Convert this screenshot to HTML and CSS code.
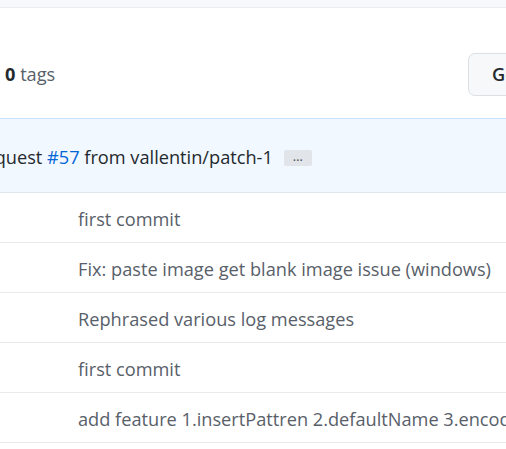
FILE: index.html
```html
<!DOCTYPE html>
<html>
<head>
<meta charset="utf-8">
<link rel="stylesheet" href="styles.css">
</head>
<body>
<div class="page">
  <div class="topband"></div>
  <div class="navrow">
    <div class="tags"><strong>0</strong> tags</div>
    <button class="btn">Go to file</button>
  </div>
  <div class="box">
    <div class="box-header">
      <span class="msg">Merge pull re<span class="vis">quest <a class="link">#57</a> from vallentin/patch-1</span></span>
      <span class="ellipsis">…</span>
    </div>
    <div class="row"><span class="commit">first commit</span></div>
    <div class="row"><span class="commit">Fix: paste image get blank image issue (windows)</span></div>
    <div class="row"><span class="commit">Rephrased various log messages</span></div>
    <div class="row"><span class="commit">first commit</span></div>
    <div class="row"><span class="commit">add feature 1.insertPattren 2.defaultName 3.encodePath</span></div>
  </div>
</div>
</body>
</html>
```
FILE: styles.css
```css
html, body {
  margin: 0;
  padding: 0;
  background: #fff;
  overflow: hidden;
}
body {
  width: 506px;
  height: 449px;
  font-family: "Open Sans", "Noto Sans", sans-serif;
  color: #24292e;
}
.page {
  width: 506px;
  overflow: hidden;
}
.topband {
  height: 7px;
  background: #f6f8fa;
  border-bottom: 1px solid #eaecef;
}
.navrow {
  height: 110px;
  display: flex;
  align-items: center;
  justify-content: space-between;
  padding-left: 5px;
  padding-top: 22px;
  white-space: nowrap;
  margin-right: -100px;
  box-sizing: border-box;
}
.tags {
  font-size: 18.2px;
  color: #586069;
  margin-top: -1px;
}
.tags strong {
  color: #24292e;
  font-weight: 700;
}
.btn {
  width: 138px;
  height: 43px;
  border: 1px solid #dcdfe3;
  border-radius: 7px;
  background: #f6f8fa;
  font-family: inherit;
  font-size: 18.2px;
  font-weight: 600;
  color: #24292e;
  text-align: left;
  padding: 0 0 0 23px;
}
.box {
  white-space: nowrap;
}
.box-header {
  height: 75px;
  background: #f1f8ff;
  border-top: 1px solid #c8e1ff;
  border-bottom: 1px solid #dfe6ee;
  display: flex;
  align-items: center;
  padding-top: 3px;
  box-sizing: border-box;
  overflow: hidden;
}
.msg {
  font-size: 18.2px;
  color: #24292e;
  margin-left: -118px;
}
.link {
  color: #0366d6;
}
.ellipsis {
  display: inline-flex;
  align-items: center;
  justify-content: center;
  width: 28px;
  height: 16px;
  margin-left: 11px;
  margin-top: 2px;
  background: #e1e4e8;
  border-radius: 2px;
  font-size: 13px;
  line-height: 1;
  color: #444d56;
  padding-bottom: 3px;
  box-sizing: border-box;
}
.row {
  height: 50px;
  border-bottom: 1px solid #e8eaed;
  display: flex;
  align-items: center;
  padding-left: 78px;
  box-sizing: border-box;
  overflow: hidden;
}
.commit {
  font-size: 18.2px;
  color: #586069;
  margin-top: 3px;
}
```
